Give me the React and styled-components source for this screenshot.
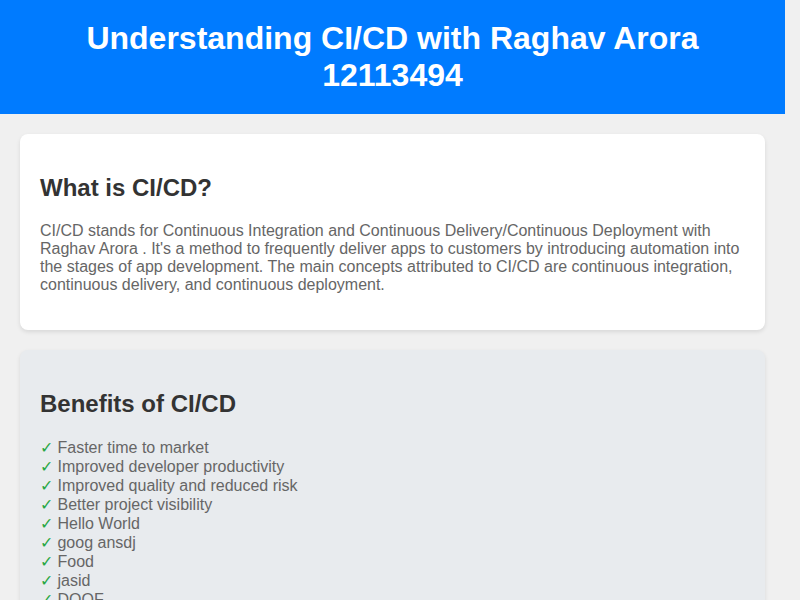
import styled, { createGlobalStyle } from 'styled-components';

const GlobalStyle = createGlobalStyle`
  body {
    margin: 0 15px 0 0;
    background: #f0f0f0;
    font-family: "Liberation Sans", Arial, sans-serif;
    color: #333;
  }
`;

const benefits = [
  'Faster time to market',
  'Improved developer productivity',
  'Improved quality and reduced risk',
  'Better project visibility',
  'Hello World',
  'goog ansdj',
  'Food',
  'jasid',
  'DOOF',
];

const Header = ({ children }) => {
  return (
    <SHeader>
      <STitle>{children}</STitle>
    </SHeader>
  );
};

const Section = ({ title, muted, children }) => {
  return (
    <SSection muted={muted}>
      <SSectionTitle>{title}</SSectionTitle>
      {children}
    </SSection>
  );
};

export default function App() {
  return (
    <>
      <GlobalStyle />
      <Header>Understanding CI/CD with Raghav Arora 12113494</Header>
      <SMain>
        <Section title="What is CI/CD?">
          <SText>
            CI/CD stands for Continuous Integration and Continuous Delivery/Continuous Deployment with
            Raghav Arora . It's a method to frequently deliver apps to customers by introducing automation
            into the stages of app development. The main concepts attributed to CI/CD are continuous
            integration, continuous delivery, and continuous deployment.
          </SText>
        </Section>
        <Section title="Benefits of CI/CD" muted>
          <SList>
            {benefits.map((item) => (
              <SItem key={item}>
                <SCheck>✓</SCheck> {item}
              </SItem>
            ))}
          </SList>
        </Section>
      </SMain>
    </>
  );
}

const SHeader = styled.header`
  background: #007bff;
  color: #fff;
  padding: 20px;
  text-align: center;
`;

const STitle = styled.h1`
  margin: 0;
  font-size: 32px;
  font-weight: 700;
`;

const SMain = styled.main`
  display: flex;
  flex-direction: column;
  gap: 20px;
  padding: 20px 20px 77px;
`;

const SSection = styled.section.withConfig({ shouldForwardProp: (p) => p !== 'muted' })`
  background: ${(p) => (p.muted ? '#e8ebee' : '#fff')};
  border-radius: 8px;
  box-shadow: 0 2px 4px rgba(0, 0, 0, 0.1);
  padding: 20px;
`;

const SSectionTitle = styled.h2`
  font-size: 24px;
  font-weight: 700;
  color: #333;
  margin: 0.83em 0;
`;

const SText = styled.p`
  font-size: 16px;
  color: #666;
  margin: 16px 0;
`;

const SList = styled.ul`
  list-style: none;
  padding: 0;
  margin: 16px 0;
`;

const SItem = styled.li`
  font-size: 16px;
  color: #666;
`;

const SCheck = styled.span`
  color: #28a745;
`;
